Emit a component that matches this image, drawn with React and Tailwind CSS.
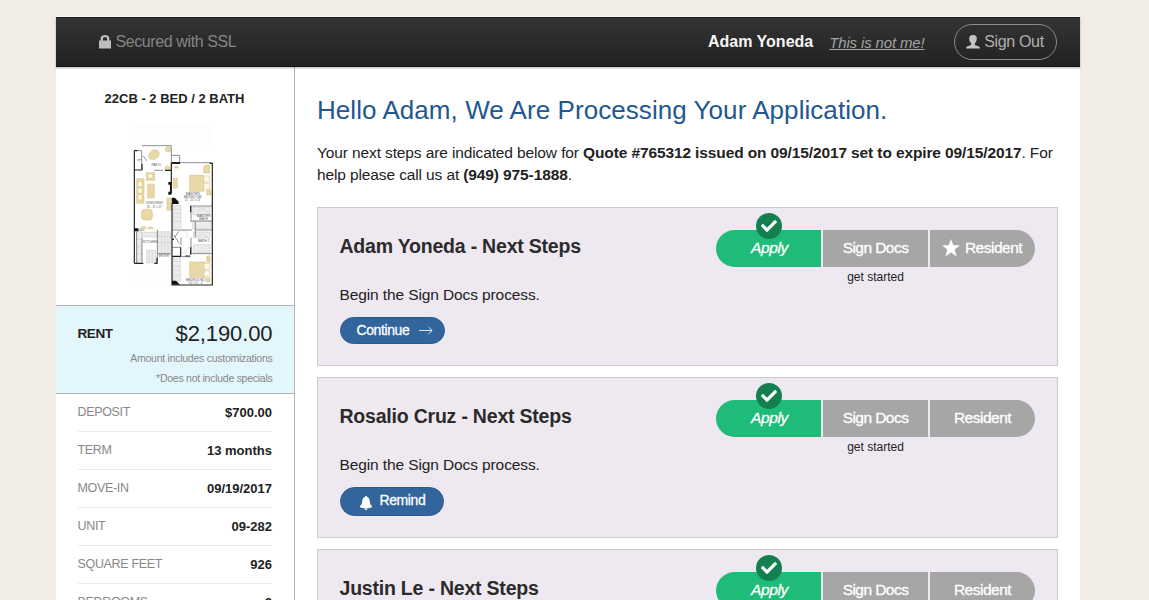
import React from 'react';
import { FaCheck } from 'react-icons/fa';

const details = [
  ['DEPOSIT', '$700.00'],
  ['TERM', '13 months'],
  ['MOVE-IN', '09/19/2017'],
  ['UNIT', '09-282'],
  ['SQUARE FEET', '926'],
  ['BEDROOMS', '2'],
];

function LockIcon() {
  return (
    <svg className="h-[14px] w-3 shrink-0" viewBox="0 0 12 14" fill="#bdbdbd">
      <path fillRule="evenodd" d="M0 5.600h1.600V3.600C1.600 1.400 3.200 0 6 0s4.400 1.400 4.400 3.600v2H12V13.500H0zM4 5.600h4V3.500C8 2.600 7.300 2.200 6 2.200S4 2.600 4 3.500z" />
    </svg>
  );
}

function UserIcon() {
  return (
    <svg className="h-[14px] w-[14px] shrink-0" viewBox="0 0 14 14" fill="#c4c4c4">
      <path d="M7 0C4.300 0 3.200 1.300 3.200 3.500c0 1.900.7 3.600 1.900 4.600v1.800L1.200 11.500C.4 11.900 0 12.500 0 13.500h14c0-1-.4-1.600-1.200-2L8.900 9.900V8.100c1.200-1 1.900-2.700 1.900-4.600C10.800 1.300 9.700 0 7 0z" />
    </svg>
  );
}

function StarIcon() {
  return (
    <svg className="size-[18px] shrink-0" viewBox="0 0 18 18" fill="#fff">
      <path d="M9 0l2.300 6.200H18l-5.300 4.300 2 7L9 13.500 3.300 17.500l2-7L0 6.200h6.700z" />
    </svg>
  );
}

function BellIcon() {
  return (
    <svg className="h-[14px] w-3 shrink-0" viewBox="0 0 12 14" fill="#fff">
      <path d="M6 0c.7 0 1 .4 1 1 1.800.5 2.500 2 2.700 3.800.2 2.800.7 3.900 2.300 5.200v1.200c-1.800.7-3.700 1-6 1s-4.200-.3-6-1V10c1.600-1.300 2.100-2.400 2.300-5.200C2.500 3 3.200 1.500 5 1c0-.6.3-1 1-1z" />
      <path d="M4.600 12.400h2.800C7.200 13.500 6.800 14 6 14s-1.200-.5-1.400-1.600z" />
    </svg>
  );
}

function FloorPlan() {
  return (
    <svg className="h-[175px] w-[110px]" viewBox="0 0 330 525" fontFamily="Liberation Sans, sans-serif">
      <path d="M45 15h232v60H45zM45 435h110v65H45z" fill="#fdfdfd" />
      <g fill="#ececec" stroke="#c4c4c4" strokeWidth="1.500">
        <path d="M159 256h24v68h-24zM159 410h22v74h-22zM114 335h38v66h-38zM49 335h16v92h-16zM66 337h44v14H66zM80 391h27v38H80zM218 262h52v22h-52zM218 304h54v22h-54zM220 336h50v18h-50zM220 374h50v24h-50z" />
      </g>
      <g fill="none" stroke="#c8c8c8" strokeWidth="1.500">
        <path d="M159 268h24M159 280h24M159 292h24M159 304h24M159 424h22M159 438h22M159 452h22M159 466h22M124 335v66M134 335v66M144 335v66M114 350h38M114 368h38M49 358h16M49 380h16M49 402h16M88 391v38M97 391v38" />
        <path d="M232 273l16-8 18 14M230 350l16-8 18 10M183 330q20 2 22 26M185 400q18-4 22-22" />
      </g>
      <g fill="#ead9a8" stroke="#d1b978" strokeWidth="1.500">
        <ellipse cx="102" cy="104" rx="17" ry="13" transform="rotate(-35 102 104)" />
        <circle cx="144" cy="88" r="8" />
        <circle cx="142" cy="145" r="7" />
        <path d="M50 176h22v74H50zM79 158h25v23H79zM83 192h20v42H83zM141 235h13v36h-13zM160 174h12v30h-12zM209 166h42v48h-42zM251 140q6-9 18-4v23h-18zM260 210h12v15h-12zM209 426h46v46h-46zM260 408h10v18h-10zM260 474h10v12h-10z" />
        <rect x="65" y="268" width="32" height="32" rx="9" />
        <path d="M60 326q10-12 20-2zM82 326q9-12 18 0zM162 144q8-10 14 0z" />
      </g>
      <g fill="#fff9e8" stroke="#d1b978" strokeWidth="1.500">
        <path d="M251 168h18v18h-18zM251 190h18v18h-18zM252 430h17v18h-17zM252 452h17v18h-17zM54 184h12v16H54zM54 204h12v16H54zM54 224h12v16H54zM84 162h14v12H84z" />
      </g>
      <g fill="none" stroke="#777" strokeWidth="2.500">
        <path d="M66 77h88v73M49 92h16v58M52 120l13-1M70 108l10 14M154 106h25v22M103 151h27M182 128h93M213 258v48M213 258h63M213 303h63M226 303v48M156 330h60M226 330h50M213 353v48M213 401h62M183 353v22M162 346l16 24M177 334l-14 18M156 382h27M185 410h26M112 329v100M112 401h39M52 330h22M66 354v74M50 335v95" />
      </g>
      <g fill="none" stroke="#222" strokeWidth="3.500">
        <path d="M43 92v338M43 92h9M43 150h22M66 132v19M43 430h27M103 430h8v-17M154 128v92M156 250v240M156 130h24M269 130h8v365h-95M156 330v165h30M156 484v10M196 495h80M182 382v27h-25M212 382v22M212 257v20M196 408h14M156 358h6M135 151h20M155 128h26" />
      </g>
      <path d="M145 186h9v38h-9v-9h5v-21h-5zM155 233h9l12 12v7h-20zM42 325h13v9H42zM156 482h12l12 12h-24z" fill="#111" />
      <g fontSize="10" fill="#555" textAnchor="middle">
        <text x="109" y="137">PATIO</text>
        <text x="103" y="253" textLength="52" lengthAdjust="spacingAndGlyphs">LIVING/DINING</text>
        <text x="103" y="264" fontSize="8">13' - 11' x 17'</text>
        <text x="218" y="225">MASTER</text>
        <text x="218" y="234">BEDROOM</text>
        <text x="218" y="243" fontSize="8">11' - 10" x 13'</text>
        <text x="251" y="291">MASTER</text>
        <text x="251" y="300">BATH</text>
        <text x="91" y="369">KITCHEN</text>
        <text x="251" y="367">BATH 2</text>
        <text x="134" y="411">ENTRY</text>
        <text x="228" y="483">BEDROOM 2</text>
        <text x="228" y="492" fontSize="8">10' x 11' - 4"</text>
      </g>
    </svg>
  );
}

function Steps({ star }) {
  return (
    <div className="w-[319px] shrink-0 pt-[22px]">
      <div className="flex h-[37px] gap-[2px] text-[15.500px] text-white [-webkit-text-stroke:0.3px_white]">
        <div className="relative flex flex-1 items-center justify-center rounded-l-[19px] bg-[#1fbc79] pb-px italic">
          <span className="ml-[3px] tracking-[-0.4px]">Apply</span>
          <span className="absolute -top-[17px] left-[40px] flex size-[26px] items-center justify-center rounded-full bg-[#14804f]">
            <FaCheck className="size-4" />
          </span>
        </div>
        <div className="flex flex-1 items-center justify-center bg-[#a6a6a6] pb-px">
          <span className="ml-px tracking-[-0.550px]">Sign Docs</span>
        </div>
        <div className="flex flex-1 items-center justify-center gap-[4px] rounded-r-[19px] bg-[#a6a6a6] pb-px">
          {star && <StarIcon />}
          <span className="ml-px tracking-[-0.5px]">Resident</span>
        </div>
      </div>
      <div className="mt-[2px] pl-px text-center text-[12px] leading-4 text-[#222]">get started</div>
    </div>
  );
}

function Card({ name, height, star, children }) {
  return (
    <section className={`${height} flex w-[741px] shrink-0 justify-between border border-[#cbcbcd] bg-[#eee8f0] pr-[22px] pl-[22px]`}>
      <div className="pt-[25px]">
        <h2 className="text-[19.500px] leading-[26px] font-bold tracking-[-0.210px] text-[#2b2b2b]">{name} - Next Steps</h2>
        <p className="mt-[25px] text-[15.500px] leading-[22px] tracking-[-0.110px]">Begin the Sign Docs process.</p>
        {children}
      </div>
      <Steps star={star} />
    </section>
  );
}

const buttonClass =
  'mt-[11px] flex items-center rounded-full border border-[#2a5b90] bg-[#31659c] text-[14px] tracking-[-0.4px] text-white [-webkit-text-stroke:0.3px_white]';

export default function App() {
  return (
    <div className="flex h-[600px] w-[1149px] justify-center overflow-hidden bg-[#f1ece6] pt-[17px] pr-[14px] font-['Liberation_Sans',Arial,sans-serif] text-[#222]">
      <div className="flex h-[640px] w-[1024px] flex-col bg-white">
        <header className="z-10 flex h-[50px] shrink-0 items-center border-y border-t-[#1c1c1c] border-b-[#141414] bg-linear-to-b from-[#343434] to-[#212121] pr-[23px] pl-[43px] text-[16px] shadow-[0_-1px_0_#faf8f5,0_1px_2px_rgba(0,0,0,0.3)]">
          <LockIcon />
          <span className="ml-[5px] tracking-[-0.4px] text-[#858585]">Secured with SSL</span>
          <span className="ml-auto font-bold text-[#f5f5f5]">Adam Yoneda</span>
          <a className="mt-[2px] ml-[16px] text-[15px] tracking-[-0.150px] text-[#a3a3a3] italic underline">This is not me!</a>
          <button className="ml-[29px] flex h-9 w-[103px] items-center justify-center gap-1 rounded-full border border-[#8c8c8c] text-[#b0b0b0]">
            <UserIcon />
            <span className="tracking-[-0.350px]">Sign Out</span>
          </button>
        </header>
        <div className="flex min-h-0 flex-1">
          <aside className="w-[239px] shrink-0 border-r border-[#b5b5b5]">
            <div className="flex h-[238px] flex-col items-center pt-[23px]">
              <h3 className="text-[13px] leading-[18px] font-bold">22CB - 2 BED / 2 BATH</h3>
              <div className="mt-[12px]">
                <FloorPlan />
              </div>
            </div>
            <div className="h-[89px] border-y border-[#adb4b6] bg-[#e3f6fc] pt-[13px] pr-[21px] pl-[22px]">
              <div className="flex items-center justify-between leading-[30px]">
                <span className="text-[13.500px] font-bold tracking-[-0.4px]">RENT</span>
                <span className="text-[22px] tracking-[-0.1px]">$2,190.00</span>
              </div>
              <div className="-mt-px text-right text-[10.500px] leading-5 tracking-[-0.260px] text-[#888]">
                <p>Amount includes customizations</p>
                <p>*Does not include specials</p>
              </div>
            </div>
            <div className="px-[22px]">
              {details.map(([label, value]) => (
                <div key={label} className="flex h-[38px] items-center justify-between border-b border-[#ebebeb]">
                  <span className="text-[12.500px] tracking-[-0.330px] text-[#888]">{label}</span>
                  <span className="-mr-[0.5px] text-[13px] font-bold">{value}</span>
                </div>
              ))}
            </div>
          </aside>
          <main className="flex-1 pl-[22px]">
            <h1 className="pt-[26px] pl-[0.5px] text-[26px] leading-[34px] tracking-[0.060px] whitespace-nowrap text-[#22578f]">Hello Adam, We Are Processing Your Application.</h1>
            <p className="mt-[15px] pl-[0.5px] text-[15.500px] leading-[22px] tracking-[-0.120px] whitespace-nowrap">
              Your next steps are indicated below for <b>Quote #765312 issued on 09/15/2017 set to expire 09/15/2017</b>. For
              <br />
              help please call us at <b>(949) 975-1888</b>.
            </p>
            <div className="mt-[21px] flex flex-col gap-[11px]">
              <Card name="Adam Yoneda" height="h-[159px]" star>
                <button className={`${buttonClass} h-[27px] w-[105px] pl-4`}>
                  <span>Continue</span>
                  <svg className="ml-[10px] h-[9px] w-[14px]" viewBox="0 0 14 9" fill="none" stroke="#dce6f0">
                    <path d="M0 4.500h13M9.500 1l3.700 3.500L9.500 8" />
                  </svg>
                </button>
              </Card>
              <Card name="Rosalio Cruz" height="h-[161px]">
                <button className={`${buttonClass} h-[29px] w-[104px] pl-[19px]`}>
                  <span className="mt-[3px]"><BellIcon /></span>
                  <span className="mb-[2px] ml-2">Remind</span>
                </button>
              </Card>
              <Card name="Justin Le" height="h-[161px]">
                <button className={`${buttonClass} h-[29px] w-[104px] pl-[19px]`}>
                  <span className="mt-[3px]"><BellIcon /></span>
                  <span className="mb-[2px] ml-2">Remind</span>
                </button>
              </Card>
            </div>
          </main>
        </div>
      </div>
    </div>
  );
}
